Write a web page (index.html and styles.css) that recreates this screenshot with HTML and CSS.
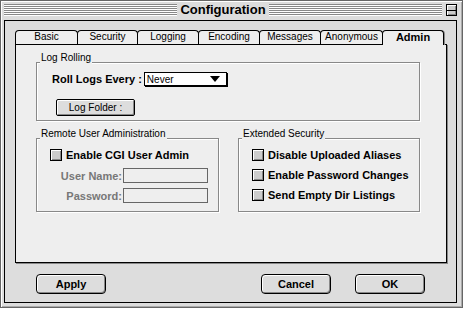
FILE: index.html
```html
<!DOCTYPE html>
<html lang="en">
<head>
    <meta charset="UTF-8">
    <title>Configuration</title>
    <link rel="stylesheet" href="styles.css">
</head>
<body>
    <div class="window">
        <div class="titlebar">
            <div class="stripes"><span class="title">Configuration</span></div>
            <div class="collapse"><span></span></div>
        </div>

        <div class="content">
            <div class="tabs">
                <div class="tab w63">Basic</div>
                <div class="tab w61">Security</div>
                <div class="tab w62">Logging</div>
                <div class="tab w62">Encoding</div>
                <div class="tab w62">Messages</div>
                <div class="tab w63">Anonymous</div>
                <div class="tab w62 active">Admin</div>
            </div>

            <div class="panel">
                <div class="group log-group">
                    <span class="legend">Log Rolling</span>
                    <div class="roll-row">
                        <span class="strong">Roll Logs Every :</span>
                        <div class="popup"><span>Never</span><span class="arrow"></span></div>
                    </div>
                    <button class="push">Log Folder :</button>
                </div>

                <div class="group-row">
                    <div class="group remote">
                        <span class="legend">Remote User Administration</span>
                        <label class="check"><span class="box"></span>Enable CGI User Admin</label>
                        <div class="field first">
                            <span class="field-label">User Name:</span>
                            <span class="input"></span>
                        </div>
                        <div class="field">
                            <span class="field-label">Password:</span>
                            <span class="input"></span>
                        </div>
                    </div>

                    <div class="group extended">
                        <span class="legend">Extended Security</span>
                        <label class="check"><span class="box"></span>Disable Uploaded Aliases</label>
                        <label class="check"><span class="box"></span>Enable Password Changes</label>
                        <label class="check"><span class="box"></span>Send Empty Dir Listings</label>
                    </div>
                </div>
            </div>

            <div class="buttons">
                <button class="btn apply">Apply</button>
                <button class="btn cancel">Cancel</button>
                <button class="btn ok">OK</button>
            </div>
        </div>
    </div>
</body>
</html>
```

FILE: styles.css
```css
* {
    box-sizing: border-box;
}
body {
    margin: 0;
    background-color: #fff;
    font-family: "Liberation Sans", Arial, sans-serif;
    color: #000;
}
.window {
    width: 463px;
    height: 308px;
    border: 1px solid #666;
    background-color: #ddd;
    box-shadow: inset 1px 1px 0 #fff, inset -1px -1px 0 #aaa;
    padding: 0 5px 4px 3px;
    display: flex;
    flex-direction: column;
}

/* title bar */
.titlebar {
    height: 19px;
    padding-top: 3px;
    display: flex;
    align-items: flex-start;
}
.stripes {
    flex: 1;
    height: 12px;
    display: flex;
    justify-content: center;
    background: repeating-linear-gradient(#888 0 1px, #fff 1px 2px);
}
.title {
    background-color: #ddd;
    padding: 0 3px;
    font-size: 13px;
    font-weight: bold;
    line-height: 13px;
    margin-top: -1px;
    height: 13px;
}
.collapse {
    width: 11px;
    height: 12px;
    margin-left: 4px;
    border: 1px solid #000;
    background-color: #ccc;
    box-shadow: inset 1px 1px 0 #fff, inset -1px -1px 0 #888;
    display: flex;
    align-items: center;
}
.collapse span {
    display: block;
    width: 100%;
    height: 1px;
    background-color: #000;
}

/* content area */
.content {
    flex: 1;
    border: 1px solid #000;
    background-color: #ddd;
    padding: 9px 9px 0 10px;
    display: flex;
    flex-direction: column;
}
.tabs {
    display: flex;
    height: 14px;
    align-items: flex-start;
}
.tab {
    height: 14px;
    margin-right: -1px;
    border: 1px solid #000;
    border-bottom: none;
    border-radius: 4px 4px 0 0;
    background-color: #eee;
    font-size: 10px;
    line-height: 12px;
    text-align: center;
}
.tab.active {
    position: relative;
    z-index: 1;
    height: 15px;
    font-size: 11px;
    font-weight: bold;
    box-shadow: 1px 0 0 #888;
}
.w61 { width: 61px; }
.w62 { width: 62px; }
.w63 { width: 63px; }

.panel {
    width: 432px;
    height: 219px;
    border: 1px solid #000;
    box-shadow: 1px 1px 0 #888;
    background-color: #eee;
    padding: 17px 0 0 20px;
}

/* group boxes */
.group {
    position: relative;
    border: 1px solid #888;
    box-shadow: inset 1px 1px 0 #fff, 1px 1px 0 #fff;
}
.legend {
    position: absolute;
    top: -11px;
    left: 3px;
    padding: 0 1px;
    background-color: #eee;
    font-size: 10px;
    line-height: 12px;
}
.log-group {
    width: 384px;
    height: 59px;
    padding: 9px 0 0 15px;
}
.roll-row {
    display: flex;
    align-items: center;
    height: 14px;
}
.strong {
    font-size: 11px;
    font-weight: bold;
    margin-right: 2px;
}
.popup {
    width: 83px;
    height: 14px;
    border: 1px solid #000;
    box-shadow: 1px 1px 0 #000;
    background-color: #fff;
    display: flex;
    align-items: center;
    justify-content: space-between;
    padding: 0 6px 0 2px;
    font-size: 10px;
}
.arrow {
    width: 0;
    height: 0;
    border-left: 5px solid transparent;
    border-right: 5px solid transparent;
    border-top: 6px solid #000;
}
.push {
    display: block;
    width: 79px;
    height: 17px;
    margin: 13px 0 0 4px;
    padding: 0;
    border: 1px solid #000;
    border-radius: 2px;
    background-color: #ddd;
    box-shadow: inset 1px 1px 0 #fff, inset -1px -1px 0 #888;
    font-family: inherit;
    font-size: 10px;
    color: #000;
}

.group-row {
    display: flex;
    gap: 19px;
    margin-top: 17px;
}
.remote {
    width: 183px;
    height: 74px;
    padding: 10px 0 0 13px;
}
.extended {
    width: 182px;
    height: 74px;
    padding: 10px 0 0 13px;
}
.check {
    display: flex;
    align-items: center;
    height: 12px;
    font-size: 11px;
    font-weight: bold;
}
.extended .check + .check {
    margin-top: 8px;
}
.box {
    width: 12px;
    height: 12px;
    margin-right: 4px;
    border: 1px solid #000;
    background-color: #ccc;
    box-shadow: inset 1px 1px 0 #fff, inset -1px -1px 0 #888;
}
.field {
    display: flex;
    align-items: center;
    height: 15px;
    margin-top: 5px;
}
.field.first {
    margin-top: 7px;
}
.field-label {
    width: 72px;
    text-align: right;
    font-size: 11px;
    font-weight: bold;
    color: #777;
}
.input {
    width: 85px;
    height: 15px;
    margin-left: 1px;
    border: 1px solid #666;
}

/* bottom buttons */
.buttons {
    display: flex;
    margin-top: 11px;
}
.btn {
    width: 70px;
    height: 20px;
    padding: 0;
    border: 1px solid #000;
    border-radius: 4px;
    background-color: #ddd;
    box-shadow: inset 1px 1px 0 #fff, inset -1px -1px 0 #888;
    font-family: inherit;
    font-size: 11px;
    font-weight: bold;
    color: #000;
}
.apply {
    margin-left: 21px;
}
.cancel {
    margin-left: auto;
}
.ok {
    margin-left: 24px;
    margin-right: 22px;
}
```
